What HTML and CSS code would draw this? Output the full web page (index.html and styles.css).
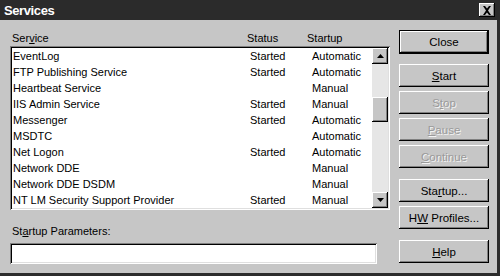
FILE: index.html
```html
<!DOCTYPE html>
<html>
<head>
<meta charset="utf-8">
<link rel="stylesheet" href="styles.css">
</head>
<body>
<div class="window">
  <div class="titlebar">
    <span class="title">Services</span>
    <span class="xbtn"><svg width="10" height="9" viewBox="0 0 10 9"><path d="M1 0h2l2 2.5L7 0h2L6 4.5 9 9H7L5 6.5 3 9H1l3-4.5z" fill="#000"/></svg></span>
  </div>
  <div class="client">
    <div class="left">
      <div class="headers">
        <span>Ser<u>v</u>ice</span><span>Status</span><span>Startup</span>
      </div>
      <div class="listbox">
        <div class="rows">
          <div class="row"><span>EventLog</span><span>Started</span><span>Automatic</span></div>
          <div class="row"><span>FTP Publishing Service</span><span>Started</span><span>Automatic</span></div>
          <div class="row"><span>Heartbeat Service</span><span></span><span>Manual</span></div>
          <div class="row"><span>IIS Admin Service</span><span>Started</span><span>Manual</span></div>
          <div class="row"><span>Messenger</span><span>Started</span><span>Automatic</span></div>
          <div class="row"><span>MSDTC</span><span></span><span>Automatic</span></div>
          <div class="row"><span>Net Logon</span><span>Started</span><span>Automatic</span></div>
          <div class="row"><span>Network DDE</span><span></span><span>Manual</span></div>
          <div class="row"><span>Network DDE DSDM</span><span></span><span>Manual</span></div>
          <div class="row"><span>NT LM Security Support Provider</span><span>Started</span><span>Manual</span></div>
        </div>
        <div class="scrollbar">
          <div class="sbtn"><svg width="7" height="4" viewBox="0 0 7 4"><path d="M3.5 0L7 4H0z" fill="#000"/></svg></div>
          <div class="track"><div class="thumb"></div></div>
          <div class="sbtn"><svg width="7" height="4" viewBox="0 0 7 4"><path d="M0 0h7L3.5 4z" fill="#000"/></svg></div>
        </div>
      </div>
      <div class="label">St<u>a</u>rtup Parameters:</div>
      <div class="input"></div>
    </div>
    <div class="buttons">
      <div class="btn default">Close</div>
      <div class="btn g1"><span><u>S</u>tart</span></div>
      <div class="btn disabled"><span>S<u>t</u>op</span></div>
      <div class="btn disabled"><span><u>P</u>ause</span></div>
      <div class="btn disabled"><span><u>C</u>ontinue</span></div>
      <div class="btn g2"><span>Sta<u>r</u>tup...</span></div>
      <div class="btn"><span>H<u>W</u> Profiles...</span></div>
      <div class="btn g3"><span><u>H</u>elp</span></div>
    </div>
  </div>
</div>
</body>
</html>
```
FILE: styles.css
```css
html, body {
  margin: 0;
  padding: 0;
  background: #c6c6c6;
}
.window {
  width: 500px;
  height: 276px;
  box-sizing: border-box;
  background: #c6c6c6;
  border-right: 3px solid #2b2b2b;
  border-bottom: 3px solid #2b2b2b;
  display: flex;
  flex-direction: column;
  font-family: "Liberation Sans", Arial, sans-serif;
  font-size: 11px;
  color: #000;
}
.titlebar {
  height: 20px;
  background: #2b2b2b;
  display: flex;
  align-items: center;
  justify-content: space-between;
  padding: 0 3px 0 4px;
  margin-right: -3px;
}
.title {
  color: #fff;
  font-weight: bold;
  font-size: 13px;
  letter-spacing: -0.4px;
}
.xbtn {
  width: 16px;
  height: 14px;
  background: #c6c6c6;
  box-shadow: inset -1px -1px #000, inset 1px 1px #fff, inset -2px -2px #808080;
  display: flex;
  align-items: center;
  justify-content: center;
  margin-right: 2px;
}
.client {
  flex: 1;
  display: flex;
  padding: 10px 8px 0 10px;
  gap: 9px;
}
.left {
  width: 380px;
  display: flex;
  flex-direction: column;
}
.headers {
  height: 16px;
  display: grid;
  grid-template-columns: 235px 60px 1fr;
  align-items: center;
  padding-left: 2px;
}
.listbox {
  height: 164px;
  box-sizing: border-box;
  background: #fff;
  padding: 2px;
  box-shadow: inset 1px 1px #808080, inset -1px -1px #fff, inset 2px 2px #000, inset -2px -2px #dfdfdf;
  display: flex;
}
.rows {
  flex: 1;
  padding-left: 1px;
}
.row {
  height: 16px;
  display: grid;
  grid-template-columns: 237px 62px 1fr;
  align-items: center;
}
.scrollbar {
  width: 16px;
  display: flex;
  flex-direction: column;
}
.sbtn {
  height: 16px;
  background: #c6c6c6;
  box-shadow: inset -1px -1px #000, inset 1px 1px #fff, inset -2px -2px #808080;
  display: flex;
  align-items: center;
  justify-content: center;
}
.track {
  flex: 1;
  background: #e6e6e6;
  padding-top: 33px;
}
.thumb {
  height: 25px;
  background: #c6c6c6;
  box-shadow: inset -1px -1px #000, inset 1px 1px #fff, inset -2px -2px #808080;
}
.label {
  margin-top: 14px;
  height: 14px;
  line-height: 14px;
  padding-left: 2px;
}
.input {
  margin-top: 5px;
  width: 367px;
  height: 21px;
  box-sizing: border-box;
  background: #fff;
  box-shadow: inset 1px 1px #808080, inset -1px -1px #fff, inset 2px 2px #000, inset -2px -2px #dfdfdf;
}
.buttons {
  width: 90px;
  display: flex;
  flex-direction: column;
  gap: 4px;
}
.btn {
  height: 23px;
  box-sizing: border-box;
  display: flex;
  align-items: center;
  justify-content: center;
  background: #c6c6c6;
  box-shadow: inset -1px -1px #000, inset 1px 1px #fff, inset -2px -2px #808080;
  font-size: 11.5px;
}
.btn.default {
  height: 24px;
  border: 1px solid #000;
}
.btn.g1 { margin-top: 6px; }
.btn.g2 { margin-top: 7px; }
.btn.g3 { margin-top: 7px; }
.btn.disabled {
  color: #9a9a9a;
  text-shadow: 1px 1px 0 #f4f4f4;
}
```
